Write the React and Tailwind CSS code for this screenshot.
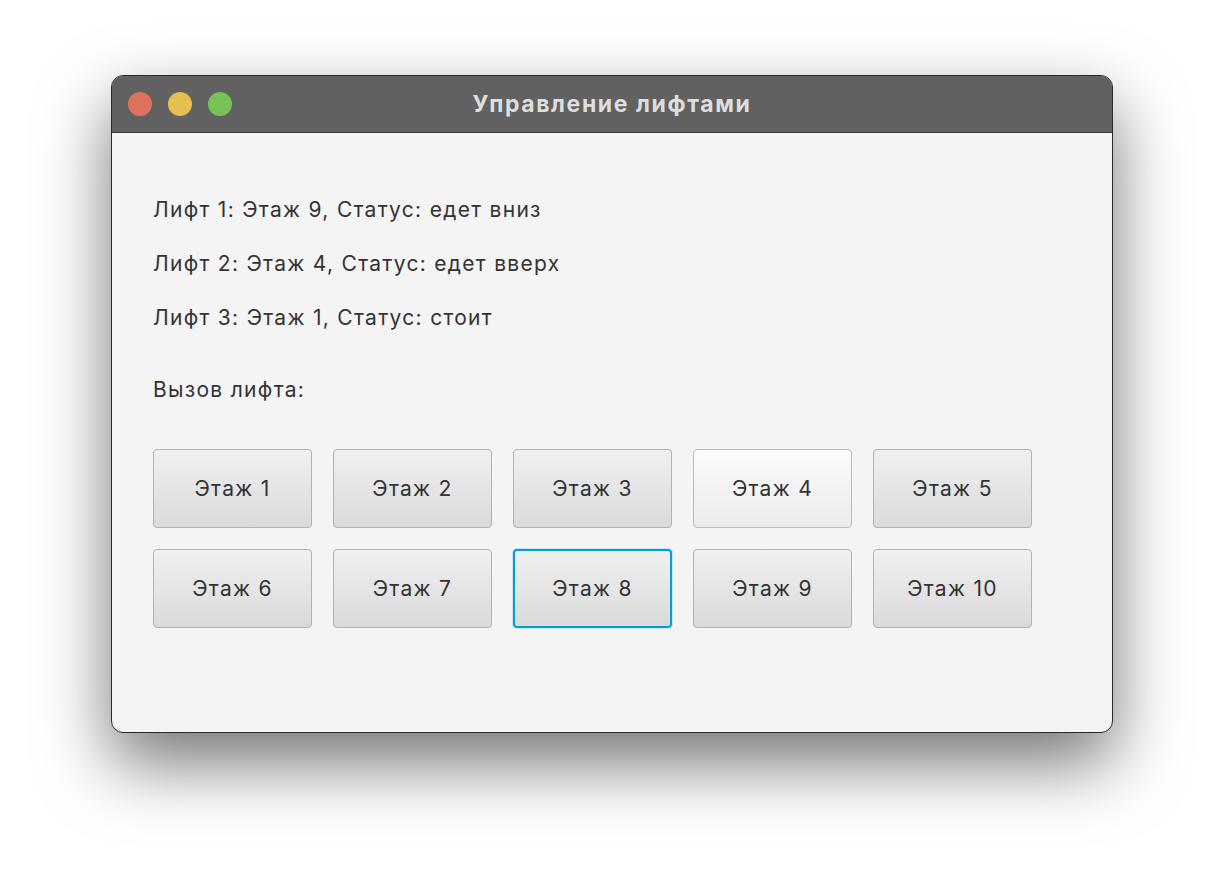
import React from "react";

const floors = [1, 2, 3, 4, 5, 6, 7, 8, 9, 10];

const lifts = [
  "Лифт 1: Этаж 9, Статус: едет вниз",
  "Лифт 2: Этаж 4, Статус: едет вверх",
  "Лифт 3: Этаж 1, Статус: стоит",
];

const FloorButton = ({ n }) => {
  // 4 is hovered, 8 has focus in the screenshot
  let look =
    "border border-[#b2b2b2] bg-gradient-to-b from-[#f0f0f0] to-[#dadada]";
  if (n === 4)
    look = "border border-[#bababa] bg-gradient-to-b from-[#fbfbfb] to-[#ebebeb]";
  if (n === 8)
    look =
      "border-2 border-[#0a9ad6] bg-gradient-to-b from-[#f0f0f0] to-[#dadada] shadow-[0_0_0_1px_#c4e6f5]";

  return (
    <button
      className={`w-[159px] h-[79px] rounded-[4px] text-[21px] tracking-[1.3px] text-[#333] ${look}`}
    >
      Этаж {n}
    </button>
  );
};

export default function App() {
  return (
    <div
      className="w-[1224px] h-[880px] bg-white pt-[75px] pl-[111px]"
      style={{ fontFamily: "Inter, 'Noto Sans', sans-serif" }}
    >
      <div className="w-[1002px] h-[658px] rounded-[12px] border border-[#2a2a2a] bg-[#f4f4f4] overflow-hidden flex flex-col shadow-[0_30px_70px_rgba(0,0,0,0.55)]">
        {/* Title bar */}
        <div className="h-[57px] bg-[#616161] border-b border-[#3a3a3a] flex items-center relative">
          <div className="flex gap-[16px] pl-[16px]">
            <span className="size-[24px] rounded-full bg-[#dd735f]" />
            <span className="size-[24px] rounded-full bg-[#e7bf50]" />
            <span className="size-[24px] rounded-full bg-[#78c257]" />
          </div>
          <div className="absolute inset-0 flex items-center justify-center text-[23px] font-bold tracking-[1.6px] text-[#dedede]">
            Управление лифтами
          </div>
        </div>

        {/* Content */}
        <div className="pl-[41px] pt-[65px] text-[21px] tracking-[1.3px] text-[#333] leading-[24px]">
          <div className="flex flex-col gap-[30px]">
            {lifts.map((l) => (
              <p key={l}>{l}</p>
            ))}
          </div>
          <p className="mt-[48px]">Вызов лифта:</p>
          <div className="mt-[47px] grid grid-cols-[repeat(5,159px)] gap-x-[21px] gap-y-[21px]">
            {floors.map((n) => (
              <FloorButton key={n} n={n} />
            ))}
          </div>
        </div>
      </div>
    </div>
  );
}
